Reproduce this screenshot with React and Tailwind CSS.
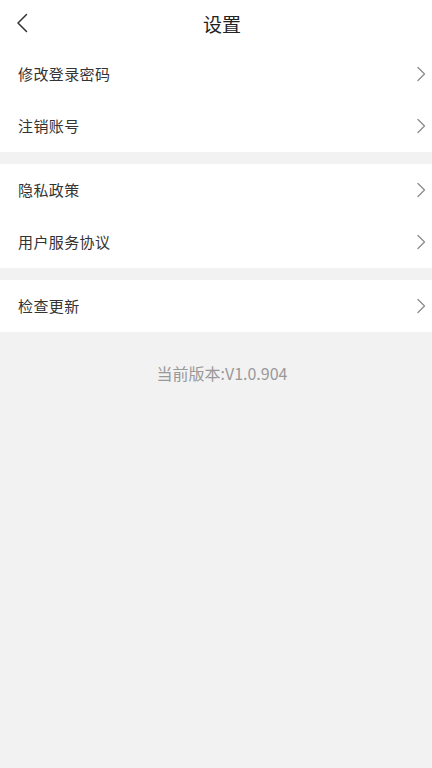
import React from "react";

const Chevron = () => (
  <svg width="10" height="16" viewBox="0 0 10 16" fill="none" className="shrink-0">
    <path d="M2 1.5 L8.5 8 L2 14.5" stroke="#8c8c8c" strokeWidth="1.3" strokeLinecap="round" strokeLinejoin="round" />
  </svg>
);

const Row = ({ label }) => (
  <div className="flex h-[52px] items-center justify-between bg-white pl-[18px] pr-[6px]">
    <span className="text-[15px] tracking-[0.4px] text-[#333333]">{label}</span>
    <Chevron />
  </div>
);

export default function App() {
  return (
    <div
      className="flex min-h-[768px] w-full flex-col bg-[#f2f2f2]"
      style={{ fontFamily: '"Noto Sans CJK SC", "Noto Sans", sans-serif' }}
    >
      <div className="relative flex h-[48px] items-center justify-center bg-white pl-[12px]">
        <svg width="14" height="20" viewBox="0 0 14 20" fill="none" className="absolute left-[15px] top-[13px]">
          <path d="M11.5 1.5 L3 10 L11.5 18.5" stroke="#333333" strokeWidth="1.5" strokeLinecap="round" strokeLinejoin="round" />
        </svg>
        <span className="text-[19px] text-[#222222]">设置</span>
      </div>
      <Row label="修改登录密码" />
      <Row label="注销账号" />
      <div className="h-[12px]" />
      <Row label="隐私政策" />
      <Row label="用户服务协议" />
      <div className="h-[12px]" />
      <Row label="检查更新" />
      <div className="pl-[12px] pt-[29px] text-center text-[16px] text-[#999999]">当前版本:V1.0.904</div>
    </div>
  );
}
